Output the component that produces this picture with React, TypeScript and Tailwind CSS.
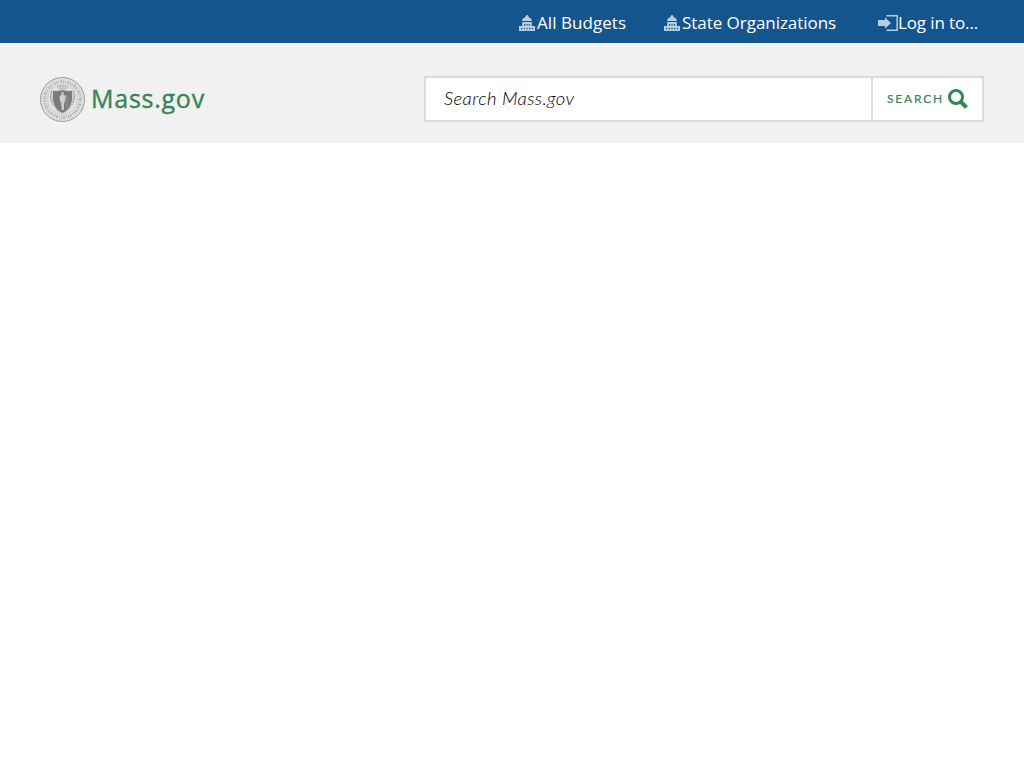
import React from "react";

function StateHouse() {
  return (
    <svg width="16" height="16" viewBox="0 0 16 16" fill="#b9cde0" className="shrink-0">
      <path d="M7.200 0h1.600v1h.7v1.200C11.600 2.600 12.800 4 13 6H3c.2-2 1.400-3.400 3.500-3.800V1h.7z" />
      <path fillRule="evenodd" d="M3.200 7h9.600v4H16v5H0v-5h3.200zM5 9v1.500h1.200V9zM7.400 9v1.500h1.200V9zM9.800 9v1.500H11V9zM2 13v1.200h1.200V13zM4.700 13v1.200h1.200V13zM7.400 13v1.200h1.200V13zM10.100 13v1.200h1.200V13zM12.800 13v1.200H14V13z" />
    </svg>
  );
}

function LoginIcon() {
  return (
    <svg width="20" height="16" viewBox="0 0 20 16" className="shrink-0">
      <path d="M8.500 .8H19.200V15.200H8.500" fill="none" stroke="#b9cde0" strokeWidth="1.500" />
      <path d="M0 5h7V2.200L13 8l-6 5.800V11H0z" fill="#b9cde0" />
    </svg>
  );
}

function Seal() {
  return (
    <svg width="45" height="45" viewBox="0 0 45 45" className="shrink-0">
      <circle cx="22.500" cy="22.500" r="22" fill="#e4e4e4" stroke="#999" />
      <circle cx="22.500" cy="22.500" r="20.500" fill="none" stroke="#d2d2d2" strokeWidth=".6" />
      <circle cx="22.500" cy="22.500" r="17.800" fill="none" stroke="#b4b4b4" strokeWidth="3.200" strokeDasharray="1.200 1 .8 1.300 1.700 1" />
      <circle cx="22.500" cy="22.500" r="15" fill="#e2e2e2" stroke="#c4c4c4" strokeWidth=".7" />
      <path d="M12 14q-3 7 1 13t7 8M33 14q3 7-1 13t-7 8" fill="none" stroke="#a2a2a2" strokeWidth="1.500" strokeDasharray="2 .6" />
      <path d="M17 10q5-4 11 0l-2 2h-7z" fill="#cacaca" stroke="#b2b2b2" strokeWidth=".6" />
      <path d="M12.500 13.500q5 1 10-1 5 2 10 1v9q-1 10-10 14-9-4-10-14z" fill="#7b7b7b" stroke="#cfcfcf" />
      <path d="M21.400 15.500q1.100-1.300 2.200 0l-.2 2 2.300 1.500-.4 5-1.300 2-.2 7h-2l-.6-7-1.300-2-.2-4.500 1.900-2z" fill="#d0d0d0" />
      <path d="M27 18V31" stroke="#a5a5a5" strokeWidth=".7" />
    </svg>
  );
}

export default function App() {
  return (
    <div className="min-h-screen bg-white">
      <nav className="flex h-[43px] items-center bg-[#14558f] pb-px pl-[519px] pt-1 font-['Open_Sans',sans-serif] text-[17px] leading-6 text-white">
        <a className="flex w-[145px] items-center gap-[2px] whitespace-nowrap"><StateHouse /><span className="tracking-[0.05px]">All Budgets</span></a>
        <a className="flex w-[214px] items-center gap-[2px] whitespace-nowrap"><StateHouse /><span className="tracking-[-0.04px]">State Organizations</span></a>
        <a className="flex items-center whitespace-nowrap"><LoginIcon /><span className="tracking-[-0.12px]">Log in to...</span></a>
      </nav>
      <header className="flex h-[100px] items-start justify-between bg-[#f1f1f1] px-10 pt-[33px]">
        <a className="flex h-[46px] items-center gap-[6px] pt-px">
          <Seal />
          <span className="pb-[3px] font-['Open_Sans',sans-serif] text-[25px] font-medium leading-[34px] tracking-[0.75px] text-[#388557] [-webkit-text-stroke:0.4px_#388557]">Mass.gov</span>
        </a>
        <form className="flex h-[46px] w-[560px] border-2 border-[#dcdcdc] bg-white">
          <input
            className="min-w-0 flex-1 bg-white px-[18px] font-['Lato',sans-serif] text-[18.5px] font-light italic tracking-[0.38px] text-black outline-none placeholder:text-black placeholder:opacity-100"
            placeholder="Search Mass.gov"
            aria-label="Search Mass.gov"
          />
          <button type="button" className="flex w-[111px] items-center gap-1 border-l-2 border-[#dcdcdc] pl-[14px] font-['Lato',sans-serif] text-[12px] font-normal tracking-[1.8px] text-[#388557] [-webkit-text-stroke:0.2px_#388557]">
            <span className="w-[57px] text-left">SEARCH</span>
            <svg width="20" height="20" viewBox="0 0 20 20" fill="none" stroke="#388557" className="shrink-0">
              <circle cx="8" cy="8" r="6.500" strokeWidth="3" />
              <path d="M12.500 12.500l6 6" strokeWidth="4" />
            </svg>
          </button>
        </form>
      </header>
    </div>
  );
}
